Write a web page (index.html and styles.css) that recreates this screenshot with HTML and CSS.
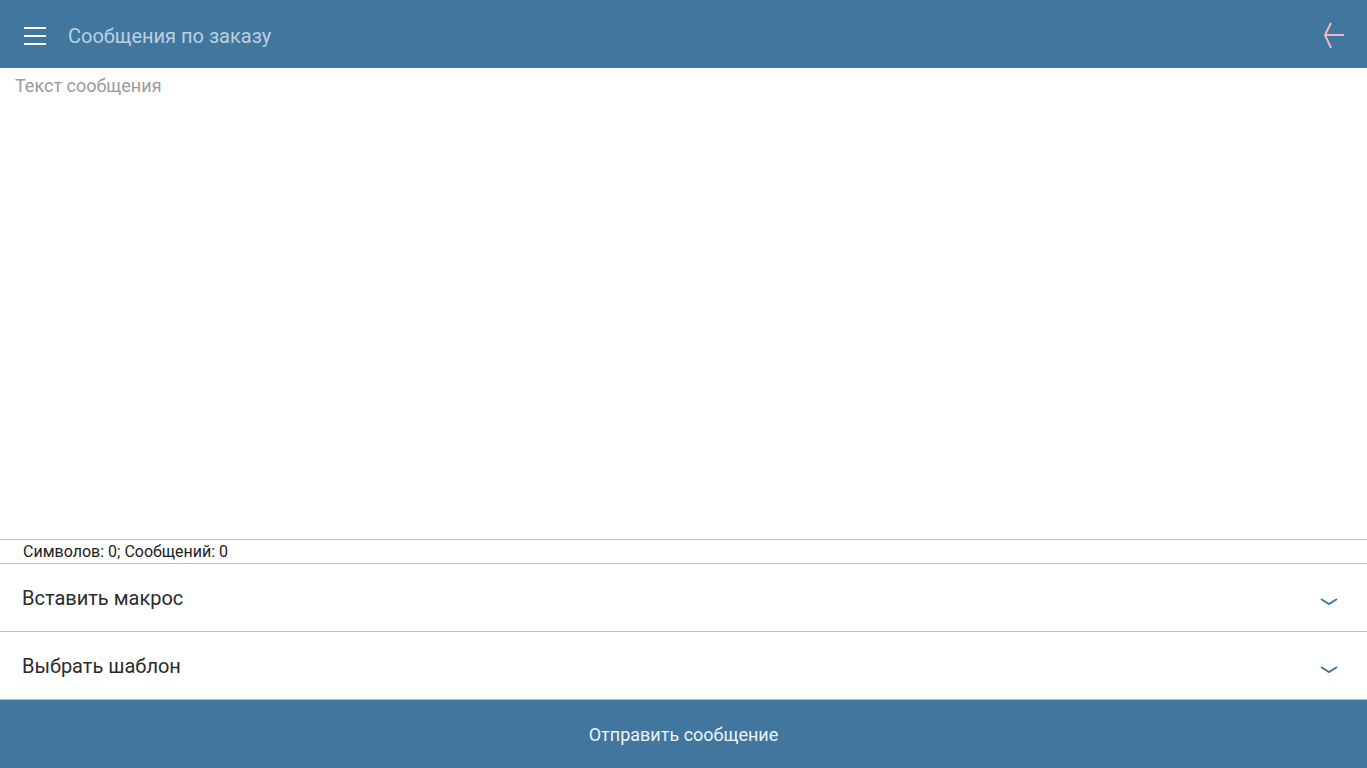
FILE: index.html
```html
<!DOCTYPE html>
<html lang="ru">
<head>
    <meta charset="UTF-8">
    <meta name="viewport" content="width=device-width, initial-scale=1.0">
    <title>Сообщения по заказу</title>
    <link rel="stylesheet" href="styles.css">
</head>
<body>
    <div class="app">
        <header class="topbar">
            <button class="menu-btn" type="button" aria-label="Меню">
                <span></span><span></span><span></span>
            </button>
            <h1 class="title">Сообщения по заказу</h1>
            <button class="back-btn" type="button" aria-label="Назад">
                <svg width="22" height="30" viewBox="0 0 22 30">
                    <polyline points="8,2 2,14 8,27" fill="none" stroke="#f4b6c6" stroke-width="2"/>
                    <line x1="2" y1="14" x2="21" y2="14" stroke="#f4b6c6" stroke-width="2"/>
                </svg>
            </button>
        </header>

        <textarea class="message" placeholder="Текст сообщения"></textarea>

        <div class="counter">Символов: 0; Сообщений: 0</div>

        <div class="select-row">
            <span>Вставить макрос</span>
            <svg class="chevron" width="18" height="10" viewBox="0 0 18 10">
                <polyline points="1,2 9,7 17,2" fill="none" stroke="#3f77a5" stroke-width="2"/>
            </svg>
        </div>
        <div class="select-row">
            <span>Выбрать шаблон</span>
            <svg class="chevron" width="18" height="10" viewBox="0 0 18 10">
                <polyline points="1,2 9,7 17,2" fill="none" stroke="#3f77a5" stroke-width="2"/>
            </svg>
        </div>

        <button class="send-btn" type="button">Отправить сообщение</button>
    </div>
</body>
</html>
```

FILE: styles.css
```css
body { margin: 0; font-family: Roboto, "Noto Sans", sans-serif; background: #fff; }
.app { display: flex; flex-direction: column; height: 768px; }

.topbar { height: 68px; flex: none; display: flex; align-items: center; background: #41779f; padding: 4px 24px 0; box-sizing: border-box; }
.menu-btn { display: flex; flex-direction: column; gap: 5.5px; width: 22px; padding: 0; margin: 0 22px 0 0; background: none; border: none; cursor: pointer; }
.menu-btn span { display: block; height: 2.5px; background: #fff; }
.title { flex: 1; margin: 0; font-size: 20px; font-weight: 400; color: #bccfdf; }
.back-btn { display: flex; padding: 0; margin-right: -2px; background: none; border: none; cursor: pointer; }

.message { flex: 1; border: none; outline: none; resize: none; padding: 7px 15px; font-family: inherit; font-size: 18px; color: #333; }
.message::placeholder { color: #9a9a9a; }

.counter { flex: none; height: 25px; box-sizing: border-box; padding: 1px 23px 0; font-size: 16px; color: #222; border-top: 1px solid #b9c3cc; border-bottom: 1px solid #b9c3cc; line-height: 22px; }

.select-row { flex: none; height: 68px; box-sizing: border-box; display: flex; align-items: center; justify-content: space-between; padding: 0 29px 0 22px; font-size: 20px; color: #2b2b2b; border-bottom: 1px solid #b9c3cc; }
.chevron { margin-top: 8px; }

.send-btn { flex: none; height: 68px; border: none; background: #41779f; color: #eef3f8; font-family: inherit; font-size: 18px; cursor: pointer; }
```
